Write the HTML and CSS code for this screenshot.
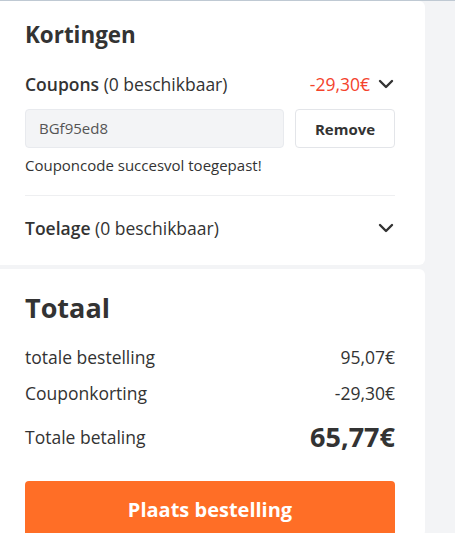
FILE: index.html
```html
<!DOCTYPE html>
<html lang="nl">
<head>
<meta charset="utf-8">
<title>Kortingen</title>
<link rel="stylesheet" href="styles.css">
</head>
<body>
<div class="page">
  <section class="card discounts">
    <h2 class="title">Kortingen</h2>
    <div class="acc-head">
      <span class="acc-label"><strong>Coupons</strong> (0 beschikbaar)</span>
      <span class="acc-right">
        <span class="neg">-29,30€</span>
        <svg class="chev" viewBox="0 0 16 10" width="16" height="10" aria-hidden="true"><path d="M2 2 L8 8 L14 2" fill="none" stroke="#333" stroke-width="2.4" stroke-linecap="round" stroke-linejoin="round"/></svg>
      </span>
    </div>
    <div class="coupon-form">
      <div class="coupon-input">BGf95ed8</div>
      <button class="btn-remove" type="button">Remove</button>
    </div>
    <p class="msg">Couponcode succesvol toegepast!</p>
    <div class="divider"></div>
    <div class="acc-head">
      <span class="acc-label"><strong>Toelage</strong> (0 beschikbaar)</span>
      <span class="acc-right">
        <svg class="chev" viewBox="0 0 16 10" width="16" height="10" aria-hidden="true"><path d="M2 2 L8 8 L14 2" fill="none" stroke="#333" stroke-width="2.4" stroke-linecap="round" stroke-linejoin="round"/></svg>
      </span>
    </div>
  </section>
  <section class="card totals">
    <h2 class="title big">Totaal</h2>
    <div class="sum-row first"><span>totale bestelling</span><span>95,07€</span></div>
    <div class="sum-row"><span>Couponkorting</span><span>-29,30€</span></div>
    <div class="sum-row grand"><span>Totale betaling</span><span class="grand-val">65,77€</span></div>
    <button class="btn-order" type="button">Plaats bestelling</button>
  </section>
</div>
</body>
</html>
```
FILE: styles.css
```css
* { box-sizing: border-box; }
html, body { margin: 0; padding: 0; }
body {
  background: #f3f4f6;
  border-top: 1px solid #bfc9d3;
  font-family: "Open Sans", "Noto Sans", sans-serif;
  color: #333;
}
.page {
  width: 425px;
  display: flex;
  flex-direction: column;
  gap: 4px;
}
.card {
  background: #fff;
  border-radius: 0 6px 6px 0;
  padding: 19px 30px 25px 25px;
}
.title {
  margin: 0;
  font-size: 22.4px;
  line-height: 30px;
  font-weight: 700;
  color: #333;
}
.title.big {
  font-size: 27px;
  line-height: 36px;
  margin-top: 2px;
}
.acc-head {
  display: flex;
  justify-content: space-between;
  align-items: center;
  height: 24px;
  font-size: 17.5px;
  line-height: 24px;
  color: #333;
}
.discounts .acc-head:first-of-type { margin-top: 22px; }
.acc-label strong { font-weight: 600; }
.acc-right {
  display: flex;
  align-items: center;
  gap: 8px;
}
.neg { color: #f4432c; }
.chev { display: block; margin-right: 1px; }
.coupon-form {
  display: flex;
  gap: 11px;
  margin-top: 13px;
}
.coupon-input {
  flex: 1;
  height: 39px;
  background: #f3f4f6;
  border: 1px solid #e8eaee;
  border-radius: 4px;
  padding: 0 13px;
  font-size: 15px;
  line-height: 37px;
  color: #555;
}
.btn-remove {
  width: 100px;
  height: 39px;
  background: #fff;
  border: 1px solid #e3e5e9;
  border-radius: 4px;
  font-family: inherit;
  font-size: 15px;
  font-weight: 700;
  color: #333;
  padding: 0;
}
.msg {
  margin: 7px 0 0;
  font-size: 15px;
  line-height: 20px;
  color: #333;
}
.divider {
  height: 1px;
  background: #eeeff1;
  margin: 20px 0;
}
.totals { padding-bottom: 0; min-height: 264px; }
.sum-row {
  display: flex;
  justify-content: space-between;
  align-items: center;
  font-size: 17.5px;
  line-height: 24px;
  margin-top: 12px;
  color: #333;
}
.sum-row.first { margin-top: 19px; }
.sum-row.grand {
  margin-top: 14px;
  height: 36px;
}
.grand-val {
  font-size: 27px;
  font-weight: 700;
  line-height: 36px;
}
.btn-order {
  display: block;
  width: 100%;
  height: 56px;
  margin-top: 26px;
  background: #ff6e26;
  border: none;
  border-radius: 4px;
  color: #fff;
  font-family: inherit;
  font-size: 20px;
  font-weight: 700;
  padding: 0;
}
```
